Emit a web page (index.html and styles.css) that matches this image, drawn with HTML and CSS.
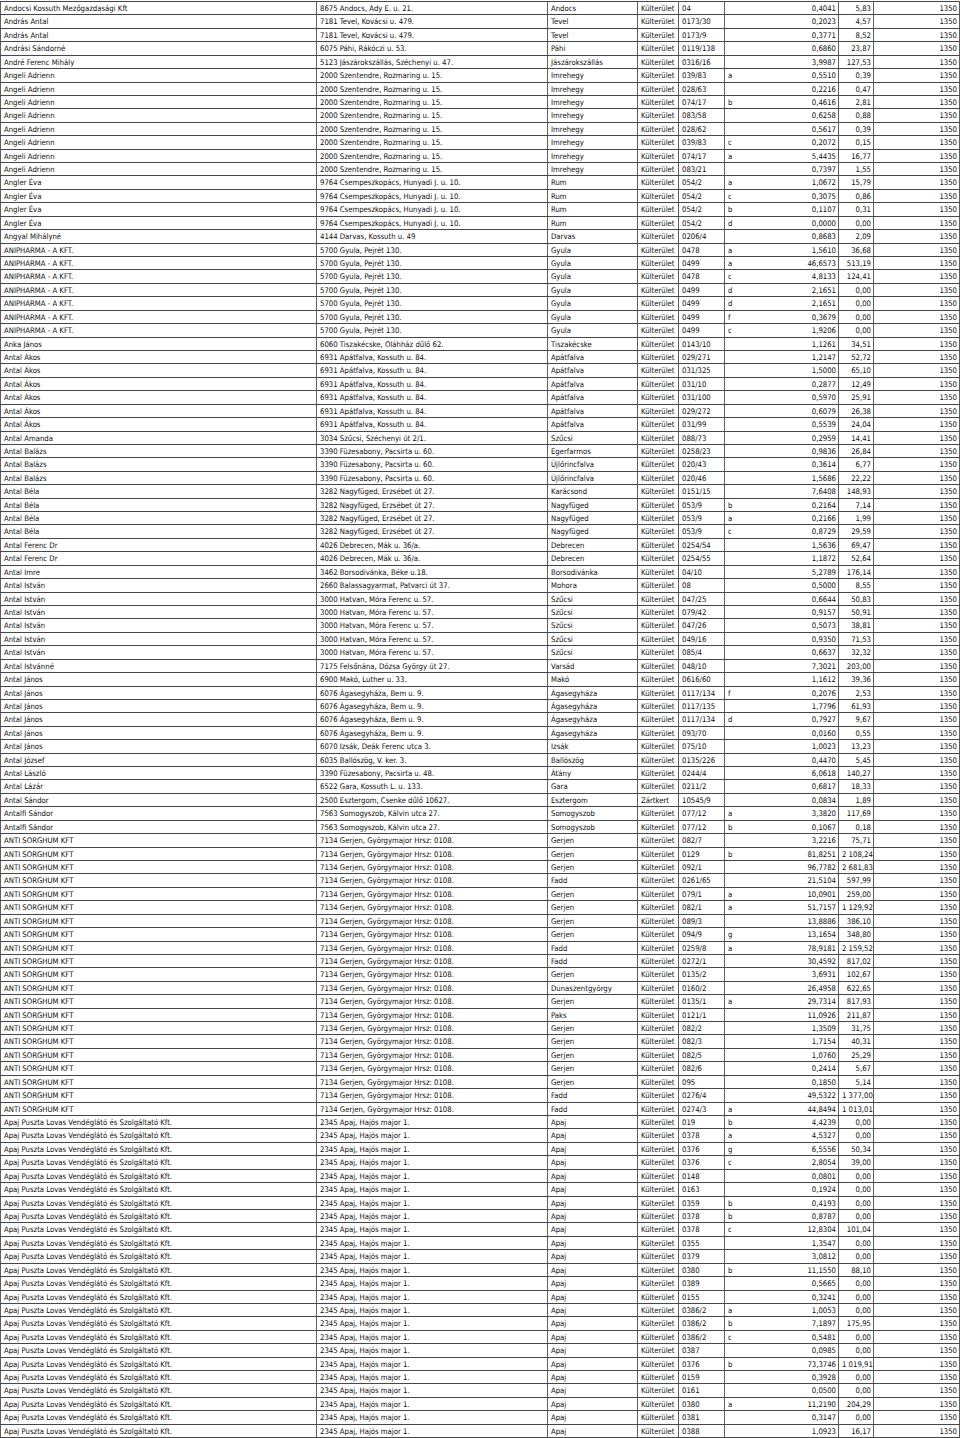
FILE: index.html
```html
<!DOCTYPE html>
<html lang="hu">
<head>
<meta charset="utf-8">
<title>Lista</title>
<link rel="stylesheet" href="styles.css">
</head>
<body>
<table class="grid">
<colgroup>
<col class="c-name"><col class="c-addr"><col class="c-city"><col class="c-type"><col class="c-hrsz"><col class="c-sub"><col class="c-area"><col class="c-val"><col class="c-year">
</colgroup>
<tbody>
<tr><td>Andocsi Kossuth Mezőgazdasági Kft</td><td>8675 Andocs, Ady E. u. 21.</td><td>Andocs</td><td>Külterület</td><td>04</td><td></td><td>0,4041</td><td>5,83</td><td>1350</td></tr>
<tr><td>András Antal</td><td>7181 Tevel, Kovácsi u. 479.</td><td>Tevel</td><td>Külterület</td><td>0173/30</td><td></td><td>0,2023</td><td>4,57</td><td>1350</td></tr>
<tr><td>András Antal</td><td>7181 Tevel, Kovácsi u. 479.</td><td>Tevel</td><td>Külterület</td><td>0173/9</td><td></td><td>0,3771</td><td>8,52</td><td>1350</td></tr>
<tr><td>Andrási Sándorné</td><td>6075 Páhi, Rákóczi u. 53.</td><td>Páhi</td><td>Külterület</td><td>0119/138</td><td></td><td>0,6860</td><td>23,87</td><td>1350</td></tr>
<tr><td>André Ferenc Mihály</td><td>5123 Jászárokszállás, Széchenyi u. 47.</td><td>Jászárokszállás</td><td>Külterület</td><td>0316/16</td><td></td><td>3,9987</td><td>127,53</td><td>1350</td></tr>
<tr><td>Angeli Adrienn</td><td>2000 Szentendre, Rozmaring u. 15.</td><td>Imrehegy</td><td>Külterület</td><td>039/83</td><td>a</td><td>0,5510</td><td>0,39</td><td>1350</td></tr>
<tr><td>Angeli Adrienn</td><td>2000 Szentendre, Rozmaring u. 15.</td><td>Imrehegy</td><td>Külterület</td><td>028/63</td><td></td><td>0,2216</td><td>0,47</td><td>1350</td></tr>
<tr><td>Angeli Adrienn</td><td>2000 Szentendre, Rozmaring u. 15.</td><td>Imrehegy</td><td>Külterület</td><td>074/17</td><td>b</td><td>0,4616</td><td>2,81</td><td>1350</td></tr>
<tr><td>Angeli Adrienn</td><td>2000 Szentendre, Rozmaring u. 15.</td><td>Imrehegy</td><td>Külterület</td><td>083/58</td><td></td><td>0,6258</td><td>0,88</td><td>1350</td></tr>
<tr><td>Angeli Adrienn</td><td>2000 Szentendre, Rozmaring u. 15.</td><td>Imrehegy</td><td>Külterület</td><td>028/62</td><td></td><td>0,5617</td><td>0,39</td><td>1350</td></tr>
<tr><td>Angeli Adrienn</td><td>2000 Szentendre, Rozmaring u. 15.</td><td>Imrehegy</td><td>Külterület</td><td>039/83</td><td>c</td><td>0,2072</td><td>0,15</td><td>1350</td></tr>
<tr><td>Angeli Adrienn</td><td>2000 Szentendre, Rozmaring u. 15.</td><td>Imrehegy</td><td>Külterület</td><td>074/17</td><td>a</td><td>5,4435</td><td>16,77</td><td>1350</td></tr>
<tr><td>Angeli Adrienn</td><td>2000 Szentendre, Rozmaring u. 15.</td><td>Imrehegy</td><td>Külterület</td><td>083/21</td><td></td><td>0,7397</td><td>1,55</td><td>1350</td></tr>
<tr><td>Angler Éva</td><td>9764 Csempeszkopács, Hunyadi J. u. 10.</td><td>Rum</td><td>Külterület</td><td>054/2</td><td>a</td><td>1,0672</td><td>15,79</td><td>1350</td></tr>
<tr><td>Angler Éva</td><td>9764 Csempeszkopács, Hunyadi J. u. 10.</td><td>Rum</td><td>Külterület</td><td>054/2</td><td>c</td><td>0,3075</td><td>0,86</td><td>1350</td></tr>
<tr><td>Angler Éva</td><td>9764 Csempeszkopács, Hunyadi J. u. 10.</td><td>Rum</td><td>Külterület</td><td>054/2</td><td>b</td><td>0,1107</td><td>0,31</td><td>1350</td></tr>
<tr><td>Angler Éva</td><td>9764 Csempeszkopács, Hunyadi J. u. 10.</td><td>Rum</td><td>Külterület</td><td>054/2</td><td>d</td><td>0,0000</td><td>0,00</td><td>1350</td></tr>
<tr><td>Angyal Mihályné</td><td>4144 Darvas, Kossuth u. 49</td><td>Darvas</td><td>Külterület</td><td>0206/4</td><td></td><td>0,8683</td><td>2,09</td><td>1350</td></tr>
<tr><td>ANIPHARMA - A KFT.</td><td>5700 Gyula, Pejrét 130.</td><td>Gyula</td><td>Külterület</td><td>0478</td><td>a</td><td>1,5610</td><td>36,68</td><td>1350</td></tr>
<tr><td>ANIPHARMA - A KFT.</td><td>5700 Gyula, Pejrét 130.</td><td>Gyula</td><td>Külterület</td><td>0499</td><td>a</td><td>46,6573</td><td>513,19</td><td>1350</td></tr>
<tr><td>ANIPHARMA - A KFT.</td><td>5700 Gyula, Pejrét 130.</td><td>Gyula</td><td>Külterület</td><td>0478</td><td>c</td><td>4,8133</td><td>124,41</td><td>1350</td></tr>
<tr><td>ANIPHARMA - A KFT.</td><td>5700 Gyula, Pejrét 130.</td><td>Gyula</td><td>Külterület</td><td>0499</td><td>d</td><td>2,1651</td><td>0,00</td><td>1350</td></tr>
<tr><td>ANIPHARMA - A KFT.</td><td>5700 Gyula, Pejrét 130.</td><td>Gyula</td><td>Külterület</td><td>0499</td><td>d</td><td>2,1651</td><td>0,00</td><td>1350</td></tr>
<tr><td>ANIPHARMA - A KFT.</td><td>5700 Gyula, Pejrét 130.</td><td>Gyula</td><td>Külterület</td><td>0499</td><td>f</td><td>0,3679</td><td>0,00</td><td>1350</td></tr>
<tr><td>ANIPHARMA - A KFT.</td><td>5700 Gyula, Pejrét 130.</td><td>Gyula</td><td>Külterület</td><td>0499</td><td>c</td><td>1,9206</td><td>0,00</td><td>1350</td></tr>
<tr><td>Anka János</td><td>6060 Tiszakécske, Oláhház dűlő 62.</td><td>Tiszakécske</td><td>Külterület</td><td>0143/10</td><td></td><td>1,1261</td><td>34,51</td><td>1350</td></tr>
<tr><td>Antal Ákos</td><td>6931 Apátfalva, Kossuth u. 84.</td><td>Apátfalva</td><td>Külterület</td><td>029/271</td><td></td><td>1,2147</td><td>52,72</td><td>1350</td></tr>
<tr><td>Antal Ákos</td><td>6931 Apátfalva, Kossuth u. 84.</td><td>Apátfalva</td><td>Külterület</td><td>031/325</td><td></td><td>1,5000</td><td>65,10</td><td>1350</td></tr>
<tr><td>Antal Ákos</td><td>6931 Apátfalva, Kossuth u. 84.</td><td>Apátfalva</td><td>Külterület</td><td>031/10</td><td></td><td>0,2877</td><td>12,49</td><td>1350</td></tr>
<tr><td>Antal Ákos</td><td>6931 Apátfalva, Kossuth u. 84.</td><td>Apátfalva</td><td>Külterület</td><td>031/100</td><td></td><td>0,5970</td><td>25,91</td><td>1350</td></tr>
<tr><td>Antal Ákos</td><td>6931 Apátfalva, Kossuth u. 84.</td><td>Apátfalva</td><td>Külterület</td><td>029/272</td><td></td><td>0,6079</td><td>26,38</td><td>1350</td></tr>
<tr><td>Antal Ákos</td><td>6931 Apátfalva, Kossuth u. 84.</td><td>Apátfalva</td><td>Külterület</td><td>031/99</td><td></td><td>0,5539</td><td>24,04</td><td>1350</td></tr>
<tr><td>Antal Amanda</td><td>3034 Szűcsi, Széchenyi út 2/1.</td><td>Szűcsi</td><td>Külterület</td><td>088/73</td><td></td><td>0,2959</td><td>14,41</td><td>1350</td></tr>
<tr><td>Antal Balázs</td><td>3390 Füzesabony, Pacsirta u. 60.</td><td>Egerfarmos</td><td>Külterület</td><td>0258/23</td><td></td><td>0,9836</td><td>26,84</td><td>1350</td></tr>
<tr><td>Antal Balázs</td><td>3390 Füzesabony, Pacsirta u. 60.</td><td>Újlőrincfalva</td><td>Külterület</td><td>020/43</td><td></td><td>0,3614</td><td>6,77</td><td>1350</td></tr>
<tr><td>Antal Balázs</td><td>3390 Füzesabony, Pacsirta u. 60.</td><td>Újlőrincfalva</td><td>Külterület</td><td>020/46</td><td></td><td>1,5686</td><td>22,22</td><td>1350</td></tr>
<tr><td>Antal Béla</td><td>3282 Nagyfüged, Erzsébet út 27.</td><td>Karácsond</td><td>Külterület</td><td>0151/15</td><td></td><td>7,6408</td><td>148,93</td><td>1350</td></tr>
<tr><td>Antal Béla</td><td>3282 Nagyfüged, Erzsébet út 27.</td><td>Nagyfüged</td><td>Külterület</td><td>053/9</td><td>b</td><td>0,2164</td><td>7,14</td><td>1350</td></tr>
<tr><td>Antal Béla</td><td>3282 Nagyfüged, Erzsébet út 27.</td><td>Nagyfüged</td><td>Külterület</td><td>053/9</td><td>a</td><td>0,2166</td><td>1,99</td><td>1350</td></tr>
<tr><td>Antal Béla</td><td>3282 Nagyfüged, Erzsébet út 27.</td><td>Nagyfüged</td><td>Külterület</td><td>053/9</td><td>c</td><td>0,8729</td><td>29,59</td><td>1350</td></tr>
<tr><td>Antal Ferenc Dr</td><td>4026 Debrecen, Mák u. 36/a.</td><td>Debrecen</td><td>Külterület</td><td>0254/54</td><td></td><td>1,5636</td><td>69,47</td><td>1350</td></tr>
<tr><td>Antal Ferenc Dr</td><td>4026 Debrecen, Mák u. 36/a.</td><td>Debrecen</td><td>Külterület</td><td>0254/55</td><td></td><td>1,1872</td><td>52,64</td><td>1350</td></tr>
<tr><td>Antal Imre</td><td>3462 Borsodivánka, Béke u.18.</td><td>Borsodivánka</td><td>Külterület</td><td>04/10</td><td></td><td>5,2789</td><td>176,14</td><td>1350</td></tr>
<tr><td>Antal István</td><td>2660 Balassagyarmat, Patvarci út 37.</td><td>Mohora</td><td>Külterület</td><td>08</td><td></td><td>0,5000</td><td>8,55</td><td>1350</td></tr>
<tr><td>Antal István</td><td>3000 Hatvan, Móra Ferenc u. 57.</td><td>Szűcsi</td><td>Külterület</td><td>047/25</td><td></td><td>0,6644</td><td>50,83</td><td>1350</td></tr>
<tr><td>Antal István</td><td>3000 Hatvan, Móra Ferenc u. 57.</td><td>Szűcsi</td><td>Külterület</td><td>079/42</td><td></td><td>0,9157</td><td>50,91</td><td>1350</td></tr>
<tr><td>Antal István</td><td>3000 Hatvan, Móra Ferenc u. 57.</td><td>Szűcsi</td><td>Külterület</td><td>047/26</td><td></td><td>0,5073</td><td>38,81</td><td>1350</td></tr>
<tr><td>Antal István</td><td>3000 Hatvan, Móra Ferenc u. 57.</td><td>Szűcsi</td><td>Külterület</td><td>049/16</td><td></td><td>0,9350</td><td>71,53</td><td>1350</td></tr>
<tr><td>Antal István</td><td>3000 Hatvan, Móra Ferenc u. 57.</td><td>Szűcsi</td><td>Külterület</td><td>085/4</td><td></td><td>0,6637</td><td>32,32</td><td>1350</td></tr>
<tr><td>Antal Istvánné</td><td>7175 Felsőnána, Dózsa György út 27.</td><td>Varsád</td><td>Külterület</td><td>048/10</td><td></td><td>7,3021</td><td>203,00</td><td>1350</td></tr>
<tr><td>Antal János</td><td>6900 Makó, Luther u. 33.</td><td>Makó</td><td>Külterület</td><td>0616/60</td><td></td><td>1,1612</td><td>39,36</td><td>1350</td></tr>
<tr><td>Antal János</td><td>6076 Ágasegyháza, Bem u. 9.</td><td>Ágasegyháza</td><td>Külterület</td><td>0117/134</td><td>f</td><td>0,2076</td><td>2,53</td><td>1350</td></tr>
<tr><td>Antal János</td><td>6076 Ágasegyháza, Bem u. 9.</td><td>Ágasegyháza</td><td>Külterület</td><td>0117/135</td><td></td><td>1,7796</td><td>61,93</td><td>1350</td></tr>
<tr><td>Antal János</td><td>6076 Ágasegyháza, Bem u. 9.</td><td>Ágasegyháza</td><td>Külterület</td><td>0117/134</td><td>d</td><td>0,7927</td><td>9,67</td><td>1350</td></tr>
<tr><td>Antal János</td><td>6076 Ágasegyháza, Bem u. 9.</td><td>Ágasegyháza</td><td>Külterület</td><td>093/70</td><td></td><td>0,0160</td><td>0,55</td><td>1350</td></tr>
<tr><td>Antal János</td><td>6070 Izsák, Deák Ferenc utca 3.</td><td>Izsák</td><td>Külterület</td><td>075/10</td><td></td><td>1,0023</td><td>13,23</td><td>1350</td></tr>
<tr><td>Antal József</td><td>6035 Ballószög, V. ker. 3.</td><td>Ballószög</td><td>Külterület</td><td>0135/226</td><td></td><td>0,4470</td><td>5,45</td><td>1350</td></tr>
<tr><td>Antal László</td><td>3390 Füzesabony, Pacsirta u. 48.</td><td>Átány</td><td>Külterület</td><td>0244/4</td><td></td><td>6,0618</td><td>140,27</td><td>1350</td></tr>
<tr><td>Antal Lázár</td><td>6522 Gara, Kossuth L. u. 133.</td><td>Gara</td><td>Külterület</td><td>0211/2</td><td></td><td>0,6817</td><td>18,33</td><td>1350</td></tr>
<tr><td>Antal Sándor</td><td>2500 Esztergom, Csenke dűlő 10627.</td><td>Esztergom</td><td>Zártkert</td><td>10545/9</td><td></td><td>0,0834</td><td>1,89</td><td>1350</td></tr>
<tr><td>Antalfi Sándor</td><td>7563 Somogyszob, Kálvin utca 27.</td><td>Somogyszob</td><td>Külterület</td><td>077/12</td><td>a</td><td>3,3820</td><td>117,69</td><td>1350</td></tr>
<tr><td>Antalfi Sándor</td><td>7563 Somogyszob, Kálvin utca 27.</td><td>Somogyszob</td><td>Külterület</td><td>077/12</td><td>b</td><td>0,1067</td><td>0,18</td><td>1350</td></tr>
<tr><td>ANTI SORGHUM KFT</td><td>7134 Gerjen, Györgymajor Hrsz: 0108.</td><td>Gerjen</td><td>Külterület</td><td>082/7</td><td></td><td>3,2216</td><td>75,71</td><td>1350</td></tr>
<tr><td>ANTI SORGHUM KFT</td><td>7134 Gerjen, Györgymajor Hrsz: 0108.</td><td>Gerjen</td><td>Külterület</td><td>0129</td><td>b</td><td>81,8251</td><td>2 108,24</td><td>1350</td></tr>
<tr><td>ANTI SORGHUM KFT</td><td>7134 Gerjen, Györgymajor Hrsz: 0108.</td><td>Gerjen</td><td>Külterület</td><td>092/1</td><td></td><td>96,7782</td><td>2 681,83</td><td>1350</td></tr>
<tr><td>ANTI SORGHUM KFT</td><td>7134 Gerjen, Györgymajor Hrsz: 0108.</td><td>Fadd</td><td>Külterület</td><td>0261/65</td><td></td><td>21,5104</td><td>597,99</td><td>1350</td></tr>
<tr><td>ANTI SORGHUM KFT</td><td>7134 Gerjen, Györgymajor Hrsz: 0108.</td><td>Gerjen</td><td>Külterület</td><td>079/1</td><td>a</td><td>10,0901</td><td>259,00</td><td>1350</td></tr>
<tr><td>ANTI SORGHUM KFT</td><td>7134 Gerjen, Györgymajor Hrsz: 0108.</td><td>Gerjen</td><td>Külterület</td><td>082/1</td><td>a</td><td>51,7157</td><td>1 129,92</td><td>1350</td></tr>
<tr><td>ANTI SORGHUM KFT</td><td>7134 Gerjen, Györgymajor Hrsz: 0108.</td><td>Gerjen</td><td>Külterület</td><td>089/3</td><td></td><td>13,8886</td><td>386,10</td><td>1350</td></tr>
<tr><td>ANTI SORGHUM KFT</td><td>7134 Gerjen, Györgymajor Hrsz: 0108.</td><td>Gerjen</td><td>Külterület</td><td>094/9</td><td>g</td><td>13,1654</td><td>348,80</td><td>1350</td></tr>
<tr><td>ANTI SORGHUM KFT</td><td>7134 Gerjen, Györgymajor Hrsz: 0108.</td><td>Fadd</td><td>Külterület</td><td>0259/8</td><td>a</td><td>78,9181</td><td>2 159,52</td><td>1350</td></tr>
<tr><td>ANTI SORGHUM KFT</td><td>7134 Gerjen, Györgymajor Hrsz: 0108.</td><td>Fadd</td><td>Külterület</td><td>0272/1</td><td></td><td>30,4592</td><td>817,02</td><td>1350</td></tr>
<tr><td>ANTI SORGHUM KFT</td><td>7134 Gerjen, Györgymajor Hrsz: 0108.</td><td>Gerjen</td><td>Külterület</td><td>0135/2</td><td></td><td>3,6931</td><td>102,67</td><td>1350</td></tr>
<tr><td>ANTI SORGHUM KFT</td><td>7134 Gerjen, Györgymajor Hrsz: 0108.</td><td>Dunaszentgyörgy</td><td>Külterület</td><td>0160/2</td><td></td><td>26,4958</td><td>622,65</td><td>1350</td></tr>
<tr><td>ANTI SORGHUM KFT</td><td>7134 Gerjen, Györgymajor Hrsz: 0108.</td><td>Gerjen</td><td>Külterület</td><td>0135/1</td><td>a</td><td>29,7314</td><td>817,93</td><td>1350</td></tr>
<tr><td>ANTI SORGHUM KFT</td><td>7134 Gerjen, Györgymajor Hrsz: 0108.</td><td>Paks</td><td>Külterület</td><td>0121/1</td><td></td><td>11,0926</td><td>211,87</td><td>1350</td></tr>
<tr><td>ANTI SORGHUM KFT</td><td>7134 Gerjen, Györgymajor Hrsz: 0108.</td><td>Gerjen</td><td>Külterület</td><td>082/2</td><td></td><td>1,3509</td><td>31,75</td><td>1350</td></tr>
<tr><td>ANTI SORGHUM KFT</td><td>7134 Gerjen, Györgymajor Hrsz: 0108.</td><td>Gerjen</td><td>Külterület</td><td>082/3</td><td></td><td>1,7154</td><td>40,31</td><td>1350</td></tr>
<tr><td>ANTI SORGHUM KFT</td><td>7134 Gerjen, Györgymajor Hrsz: 0108.</td><td>Gerjen</td><td>Külterület</td><td>082/5</td><td></td><td>1,0760</td><td>25,29</td><td>1350</td></tr>
<tr><td>ANTI SORGHUM KFT</td><td>7134 Gerjen, Györgymajor Hrsz: 0108.</td><td>Gerjen</td><td>Külterület</td><td>082/6</td><td></td><td>0,2414</td><td>5,67</td><td>1350</td></tr>
<tr><td>ANTI SORGHUM KFT</td><td>7134 Gerjen, Györgymajor Hrsz: 0108.</td><td>Gerjen</td><td>Külterület</td><td>095</td><td></td><td>0,1850</td><td>5,14</td><td>1350</td></tr>
<tr><td>ANTI SORGHUM KFT</td><td>7134 Gerjen, Györgymajor Hrsz: 0108.</td><td>Fadd</td><td>Külterület</td><td>0276/4</td><td></td><td>49,5322</td><td>1 377,00</td><td>1350</td></tr>
<tr><td>ANTI SORGHUM KFT</td><td>7134 Gerjen, Györgymajor Hrsz: 0108.</td><td>Fadd</td><td>Külterület</td><td>0274/3</td><td>a</td><td>44,8494</td><td>1 013,01</td><td>1350</td></tr>
<tr><td>Apaj Puszta Lovas Vendéglátó és Szolgáltató Kft.</td><td>2345 Apaj, Hajós major 1.</td><td>Apaj</td><td>Külterület</td><td>019</td><td>b</td><td>4,4239</td><td>0,00</td><td>1350</td></tr>
<tr><td>Apaj Puszta Lovas Vendéglátó és Szolgáltató Kft.</td><td>2345 Apaj, Hajós major 1.</td><td>Apaj</td><td>Külterület</td><td>0378</td><td>a</td><td>4,5327</td><td>0,00</td><td>1350</td></tr>
<tr><td>Apaj Puszta Lovas Vendéglátó és Szolgáltató Kft.</td><td>2345 Apaj, Hajós major 1.</td><td>Apaj</td><td>Külterület</td><td>0376</td><td>g</td><td>6,5556</td><td>50,34</td><td>1350</td></tr>
<tr><td>Apaj Puszta Lovas Vendéglátó és Szolgáltató Kft.</td><td>2345 Apaj, Hajós major 1.</td><td>Apaj</td><td>Külterület</td><td>0376</td><td>c</td><td>2,8054</td><td>39,00</td><td>1350</td></tr>
<tr><td>Apaj Puszta Lovas Vendéglátó és Szolgáltató Kft.</td><td>2345 Apaj, Hajós major 1.</td><td>Apaj</td><td>Külterület</td><td>0148</td><td></td><td>0,0801</td><td>0,00</td><td>1350</td></tr>
<tr><td>Apaj Puszta Lovas Vendéglátó és Szolgáltató Kft.</td><td>2345 Apaj, Hajós major 1.</td><td>Apaj</td><td>Külterület</td><td>0163</td><td></td><td>0,1924</td><td>0,00</td><td>1350</td></tr>
<tr><td>Apaj Puszta Lovas Vendéglátó és Szolgáltató Kft.</td><td>2345 Apaj, Hajós major 1.</td><td>Apaj</td><td>Külterület</td><td>0359</td><td>b</td><td>0,4193</td><td>0,00</td><td>1350</td></tr>
<tr><td>Apaj Puszta Lovas Vendéglátó és Szolgáltató Kft.</td><td>2345 Apaj, Hajós major 1.</td><td>Apaj</td><td>Külterület</td><td>0378</td><td>b</td><td>0,8787</td><td>0,00</td><td>1350</td></tr>
<tr><td>Apaj Puszta Lovas Vendéglátó és Szolgáltató Kft.</td><td>2345 Apaj, Hajós major 1.</td><td>Apaj</td><td>Külterület</td><td>0378</td><td>c</td><td>12,8304</td><td>101,04</td><td>1350</td></tr>
<tr><td>Apaj Puszta Lovas Vendéglátó és Szolgáltató Kft.</td><td>2345 Apaj, Hajós major 1.</td><td>Apaj</td><td>Külterület</td><td>0355</td><td></td><td>1,3547</td><td>0,00</td><td>1350</td></tr>
<tr><td>Apaj Puszta Lovas Vendéglátó és Szolgáltató Kft.</td><td>2345 Apaj, Hajós major 1.</td><td>Apaj</td><td>Külterület</td><td>0379</td><td></td><td>3,0812</td><td>0,00</td><td>1350</td></tr>
<tr><td>Apaj Puszta Lovas Vendéglátó és Szolgáltató Kft.</td><td>2345 Apaj, Hajós major 1.</td><td>Apaj</td><td>Külterület</td><td>0380</td><td>b</td><td>11,1550</td><td>88,10</td><td>1350</td></tr>
<tr><td>Apaj Puszta Lovas Vendéglátó és Szolgáltató Kft.</td><td>2345 Apaj, Hajós major 1.</td><td>Apaj</td><td>Külterület</td><td>0389</td><td></td><td>0,5665</td><td>0,00</td><td>1350</td></tr>
<tr><td>Apaj Puszta Lovas Vendéglátó és Szolgáltató Kft.</td><td>2345 Apaj, Hajós major 1.</td><td>Apaj</td><td>Külterület</td><td>0155</td><td></td><td>0,3241</td><td>0,00</td><td>1350</td></tr>
<tr><td>Apaj Puszta Lovas Vendéglátó és Szolgáltató Kft.</td><td>2345 Apaj, Hajós major 1.</td><td>Apaj</td><td>Külterület</td><td>0386/2</td><td>a</td><td>1,0053</td><td>0,00</td><td>1350</td></tr>
<tr><td>Apaj Puszta Lovas Vendéglátó és Szolgáltató Kft.</td><td>2345 Apaj, Hajós major 1.</td><td>Apaj</td><td>Külterület</td><td>0386/2</td><td>b</td><td>7,1897</td><td>175,95</td><td>1350</td></tr>
<tr><td>Apaj Puszta Lovas Vendéglátó és Szolgáltató Kft.</td><td>2345 Apaj, Hajós major 1.</td><td>Apaj</td><td>Külterület</td><td>0386/2</td><td>c</td><td>0,5481</td><td>0,00</td><td>1350</td></tr>
<tr><td>Apaj Puszta Lovas Vendéglátó és Szolgáltató Kft.</td><td>2345 Apaj, Hajós major 1.</td><td>Apaj</td><td>Külterület</td><td>0387</td><td></td><td>0,0985</td><td>0,00</td><td>1350</td></tr>
<tr><td>Apaj Puszta Lovas Vendéglátó és Szolgáltató Kft.</td><td>2345 Apaj, Hajós major 1.</td><td>Apaj</td><td>Külterület</td><td>0376</td><td>b</td><td>73,3746</td><td>1 019,91</td><td>1350</td></tr>
<tr><td>Apaj Puszta Lovas Vendéglátó és Szolgáltató Kft.</td><td>2345 Apaj, Hajós major 1.</td><td>Apaj</td><td>Külterület</td><td>0159</td><td></td><td>0,3928</td><td>0,00</td><td>1350</td></tr>
<tr><td>Apaj Puszta Lovas Vendéglátó és Szolgáltató Kft.</td><td>2345 Apaj, Hajós major 1.</td><td>Apaj</td><td>Külterület</td><td>0161</td><td></td><td>0,0500</td><td>0,00</td><td>1350</td></tr>
<tr><td>Apaj Puszta Lovas Vendéglátó és Szolgáltató Kft.</td><td>2345 Apaj, Hajós major 1.</td><td>Apaj</td><td>Külterület</td><td>0380</td><td>a</td><td>11,2190</td><td>204,29</td><td>1350</td></tr>
<tr><td>Apaj Puszta Lovas Vendéglátó és Szolgáltató Kft.</td><td>2345 Apaj, Hajós major 1.</td><td>Apaj</td><td>Külterület</td><td>0381</td><td></td><td>0,3147</td><td>0,00</td><td>1350</td></tr>
<tr><td>Apaj Puszta Lovas Vendéglátó és Szolgáltató Kft.</td><td>2345 Apaj, Hajós major 1.</td><td>Apaj</td><td>Külterület</td><td>0388</td><td></td><td>1,0923</td><td>16,17</td><td>1350</td></tr>
</tbody>
</table>
</body>
</html>
```

FILE: styles.css
```css
html, body {
  margin: 0;
  padding: 0;
  background: #ffffff;
}

body {
  padding-top: 1px;
}

.grid {
  border-collapse: collapse;
  table-layout: fixed;
  width: 959px;
  font-family: "DejaVu Sans Condensed", "DejaVu Sans", sans-serif;
  font-stretch: condensed;
  font-size: 7.7px;
  color: #0d0d0d;
}

.c-name { width: 316px; }
.c-addr { width: 231px; }
.c-city { width: 90px; }
.c-type { width: 41px; }
.c-hrsz { width: 46px; }
.c-sub  { width: 66px; }
.c-area { width: 48px; }
.c-val  { width: 35px; }
.c-year { width: 86px; }

.grid tr {
  height: 13.42px;
}

.grid td {
  padding: 1px 2px 0 3px;
  line-height: 11.42px;
  height: 11.42px;
  white-space: nowrap;
  overflow: hidden;
  vertical-align: middle;
  border-top: 1px solid #474747;
  border-bottom: 1px solid #474747;
  border-left: 1px solid #5e5e5e;
  border-right: 1px solid #5e5e5e;
}

.grid td:nth-child(6) {
  border-right: none;
}

.grid td:nth-child(7) {
  border-left: none;
}

.grid td:nth-child(n+7) {
  text-align: right;
  padding-right: 2px;
}
```
